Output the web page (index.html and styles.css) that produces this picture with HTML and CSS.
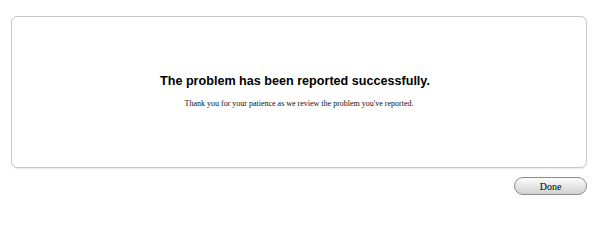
FILE: index.html
```html
<!DOCTYPE html>
<html lang="en">
<head>
<meta charset="UTF-8">
<title>Problem Reported</title>
<link rel="stylesheet" href="styles.css">
</head>
<body>
<div class="report">
  <div class="panel">
    <h1 class="title">The problem has been reported successfully.</h1>
    <p class="note">Thank you for your patience as we review the problem you've reported.</p>
  </div>
  <div class="actions">
    <button class="done">Done</button>
  </div>
</div>
</body>
</html>
```

FILE: styles.css
```css
body {
  margin: 0;
  padding: 16px 13px 0 11px;
  background: #fff;
  font-family: 'Liberation Serif', serif;
}

.panel {
  height: 152px;
  border: 1px solid #c6c6c6;
  border-radius: 6px;
  box-shadow: 0 1px 1px rgba(0, 0, 0, 0.08);
  display: flex;
  flex-direction: column;
  align-items: center;
  justify-content: center;
  padding-bottom: 3px;
  box-sizing: border-box;
}

.title {
  margin: 0 0 11px 0;
  padding-right: 8px;
  font-family: 'Liberation Sans', Arial, sans-serif;
  font-size: 12.6px;
  font-weight: bold;
  color: #000;
}

.note {
  margin: 0;
  font-size: 8px;
  color: #111;
}

.actions {
  display: flex;
  justify-content: flex-end;
  padding-top: 9px;
}

.done {
  width: 73px;
  height: 18px;
  padding: 0;
  border: 1px solid #8c8c8c;
  border-radius: 9px;
  background: linear-gradient(#fdfdfd, #e6e6e6 50%, #d2d2d2);
  font-family: 'Liberation Serif', serif;
  font-size: 10px;
  color: #000;
}
```
